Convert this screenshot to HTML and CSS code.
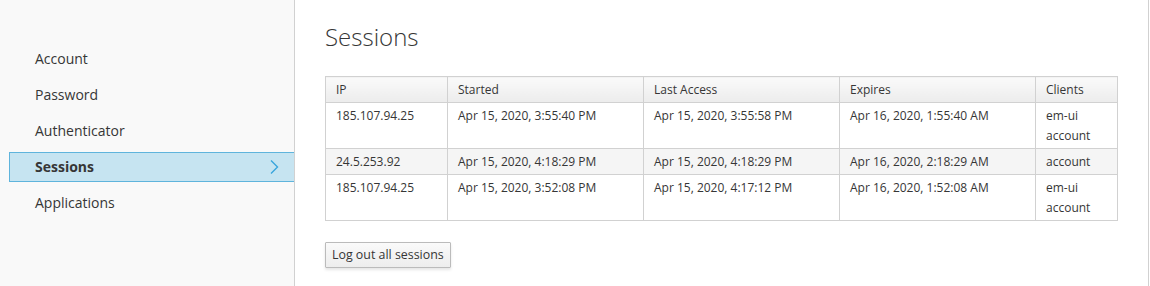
FILE: index.html
```html
<!DOCTYPE html>
<html>
<head>
<meta charset="utf-8">
<link rel="stylesheet" href="styles.css">
</head>
<body>
<div class="layout">
  <nav class="sidebar">
    <ul class="nav">
      <li class="nav-item">Account</li>
      <li class="nav-item">Password</li>
      <li class="nav-item">Authenticator</li>
      <li class="nav-item active">Sessions
        <svg class="chev" width="9" height="16" viewBox="0 0 9 16"><path d="M1 1.5 L7.5 8 L1 14.5" fill="none" stroke="#39a5dc" stroke-width="1.4"/></svg>
      </li>
      <li class="nav-item">Applications</li>
    </ul>
  </nav>
  <main class="content">
    <h1 class="title">Sessions</h1>
    <table class="sessions">
      <colgroup>
        <col class="c-ip"><col class="c-date"><col class="c-date"><col class="c-date"><col class="c-clients">
      </colgroup>
      <thead>
        <tr><th>IP</th><th>Started</th><th>Last Access</th><th>Expires</th><th>Clients</th></tr>
      </thead>
      <tbody>
        <tr>
          <td>185.107.94.25</td>
          <td>Apr 15, 2020, 3:55:40 PM</td>
          <td>Apr 15, 2020, 3:55:58 PM</td>
          <td>Apr 16, 2020, 1:55:40 AM</td>
          <td>em-ui<br>account</td>
        </tr>
        <tr class="striped">
          <td>24.5.253.92</td>
          <td>Apr 15, 2020, 4:18:29 PM</td>
          <td>Apr 15, 2020, 4:18:29 PM</td>
          <td>Apr 16, 2020, 2:18:29 AM</td>
          <td>account</td>
        </tr>
        <tr>
          <td>185.107.94.25</td>
          <td>Apr 15, 2020, 3:52:08 PM</td>
          <td>Apr 15, 2020, 4:17:12 PM</td>
          <td>Apr 16, 2020, 1:52:08 AM</td>
          <td>em-ui<br>account</td>
        </tr>
      </tbody>
    </table>
    <button class="btn">Log out all sessions</button>
  </main>
</div>
</body>
</html>
```
FILE: styles.css
```css
* { box-sizing: border-box; }
html, body { margin: 0; padding: 0; }
body {
  font-family: "Open Sans", "Liberation Sans", sans-serif;
  color: #363636;
  background: #fff;
  height: 286px;
  overflow: hidden;
}
.layout {
  display: flex;
  width: 1149px;
  height: 286px;
  border-right: 1px solid #d1d1d1;
}
.sidebar {
  width: 295px;
  flex: none;
  background: #f9f9f9;
  border-right: 1px solid #d1d1d1;
  padding-top: 44px;
}
.nav {
  list-style: none;
  margin: 0;
  padding: 0 0 0 9px;
  display: flex;
  flex-direction: column;
  gap: 6px;
}
.nav-item {
  height: 30px;
  line-height: 28px;
  font-size: 14px;
  padding-left: 25px;
  border: 1px solid transparent;
  border-right: 0;
  display: flex;
  align-items: center;
  justify-content: space-between;
  color: #363636;
}
.nav-item.active {
  background: #c6e4f1;
  border-color: #5fb4dc;
  font-weight: 700;
}
.chev { margin-right: 15px; }
.content {
  flex: 1;
  padding: 23px 0 0 30px;
}
.title {
  margin: 0 0 26px;
  font-size: 24px;
  font-weight: 300;
  line-height: 27px;
  color: #363636;
}
.sessions {
  border-collapse: collapse;
  width: 792px;
  table-layout: fixed;
  font-size: 12px;
  line-height: 20px;
  margin-bottom: 21px;
}
.c-ip { width: 122px; }
.c-date { width: 196px; }
.c-clients { width: 82px; }
.sessions th, .sessions td {
  border: 1px solid #d1d1d1;
  padding: 3px 10px 2px;
  text-align: left;
  vertical-align: top;
  font-weight: 400;
  white-space: nowrap;
}
.sessions th {
  background: linear-gradient(#fafafa, #ececec);
}
.sessions tr.striped td { background: #f5f5f5; }
.btn {
  font-family: inherit;
  font-size: 12.4px;
  line-height: 20px;
  height: 26px;
  padding: 2px 6px;
  color: #363636;
  background: linear-gradient(#fafafa, #ededed);
  border: 1px solid #bbb;
  border-radius: 1px;
  box-shadow: 0 2px 3px rgba(3, 3, 3, 0.1);
}
```
